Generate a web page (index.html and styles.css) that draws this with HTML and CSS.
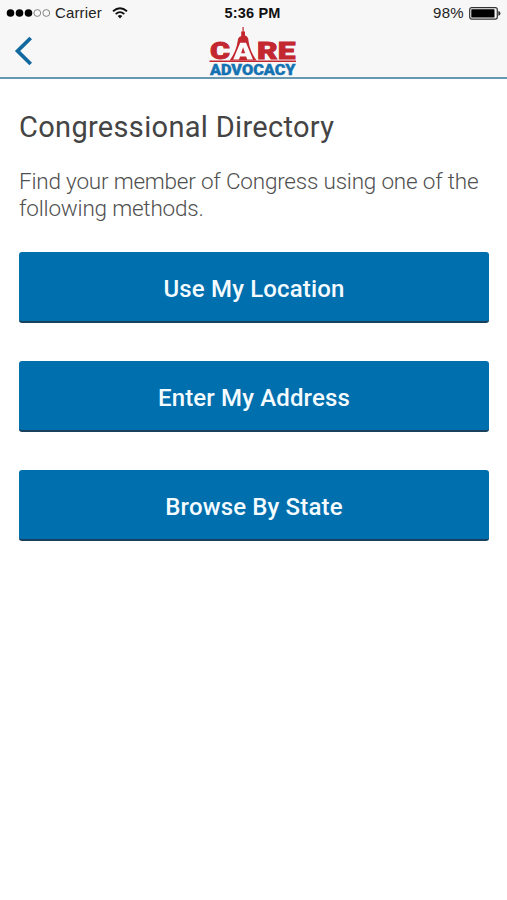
FILE: index.html
```html
<!DOCTYPE html>
<html lang="en">
<head>
<meta charset="utf-8">
<title>Congressional Directory</title>
<link rel="stylesheet" href="styles.css">
</head>
<body>
<header class="header">
  <div class="status">
    <div class="status-left">
      <svg class="signal" width="44" height="10" viewBox="0 0 44 10">
        <g fill="#000"><circle cx="4.5" cy="5" r="3.8"/><circle cx="13.5" cy="5" r="3.8"/><circle cx="22.5" cy="5" r="3.8"/></g>
        <g fill="none" stroke="#666" stroke-width=".8"><circle cx="31.3" cy="5" r="3.4"/><circle cx="40.3" cy="5" r="3.4"/></g>
      </svg>
      <span class="carrier">Carrier</span>
      <svg class="wifi" width="16" height="12" viewBox="0 0 16 12">
        <g fill="none" stroke="#111" stroke-width="1.8"><path d="M1 4.2Q8-1.8 15 4.2"/><path d="M3.7 7Q8 3.2 12.3 7"/></g>
        <path d="M5.7 9Q8 7 10.3 9L8 11.5Z" fill="#111"/>
      </svg>
    </div>
    <span class="time">5:36 PM</span>
    <div class="status-right">
      <span class="percent">98%</span>
      <svg width="32" height="13" viewBox="0 0 32 13">
        <rect x=".7" y=".7" width="27.6" height="11.4" rx="2" fill="none" stroke="#333" stroke-width="1.2"/>
        <rect x="2.3" y="2.3" width="23.2" height="8.2" rx=".5" fill="#000"/>
        <path d="M29.3 4Q31.5 4.5 31.5 6.4T29.3 8.8Z" fill="#333"/>
      </svg>
    </div>
  </div>
  <nav class="nav">
    <svg class="back" width="20" height="32" viewBox="0 0 20 32">
      <path d="M16.7 3L3.6 16L16.7 29" fill="none" stroke="#12699f" stroke-width="3.8"/>
    </svg>
    <svg class="logo" width="90" height="52" viewBox="0 0 90 52">
      <g class="logo-care">
        <text x="2" y="33" textLength="20" lengthAdjust="spacingAndGlyphs">C</text>
        <text x="49" y="33" textLength="38.5" lengthAdjust="spacingAndGlyphs">RE</text>
      </g>
      <g fill="#c32730">
        <path d="M34.5 1h1.2v4.5h1.3v4.5h-3.8V5.5h1.3Z"/>
        <path d="M29.6 15.5Q29.8 10.3 35.1 9.6T40.6 15.5Q41.8 25 48.6 34.6H21.6Q28.4 25 29.6 15.5Z"/>
        <rect x="1.5" y="34.5" width="86.5" height="1.5"/>
      </g>
      <path fill="#fafafa" fill-rule="evenodd" d="M32.2 16.8H38L45 33.6H39.2L38.1 30.5H32.1L31 33.6H25.2ZM35.1 21.2L33.1 27.3H37.1Z"/>
      <text class="logo-advocacy" x="2" y="49.1" textLength="85.5" lengthAdjust="spacingAndGlyphs">ADVOCACY</text>
    </svg>
  </nav>
</header>
<main class="content">
  <h1 class="title">Congressional Directory</h1>
  <p class="intro">Find your member of Congress using one of the<br>following methods.</p>
  <div class="actions">
    <button class="action">Use My Location</button>
    <button class="action">Enter My Address</button>
    <button class="action">Browse By State</button>
  </div>
</main>
</body>
</html>
```
FILE: styles.css
```css
* { box-sizing: border-box; }
body { margin: 0; background: #fff; font-family: Roboto, sans-serif; }
.header { height: 79px; background: #f7f7f7; border-bottom: 2px solid #6798b0; }
.status {
  display: grid;
  grid-template-columns: 1fr auto 1fr;
  align-items: center;
  height: 26px;
  padding: 0 6px 0 6px;
  font: 15px/26px "Liberation Sans", sans-serif;
  color: #222;
}
.status-left, .status-right { display: flex; align-items: center; }
.status-right { justify-content: flex-end; gap: 5px; }
.carrier { margin-left: 5px; letter-spacing: .15px; }
.wifi { margin-left: 10px; }
.time { margin-right: 2px; font-weight: 700; font-size: 14.5px; letter-spacing: .2px; color: #111; }
.percent { letter-spacing: .3px; }
.nav {
  display: grid;
  grid-template-columns: 1fr auto 1fr;
  height: 51px;
}
.back { margin: 9px 0 0 14px; }
.logo { display: block; margin-right: 1px; }
.logo-care { font: 900 24.5px Roboto, sans-serif; fill: #c32730; stroke: #c32730; stroke-width: .8px; }
.logo-advocacy { font: 900 14px Roboto, sans-serif; fill: #1472b2; stroke: #1472b2; stroke-width: .4px; }
.content { padding: 30px 18px 0 19px; }
.title { margin: 0; font-size: 29px; line-height: 36px; font-weight: 400; letter-spacing: .32px; color: #444; white-space: nowrap; }
.intro { margin: 23px 0 0; font-size: 22.5px; line-height: 26.5px; font-weight: 300; letter-spacing: -.2px; color: #505050; white-space: nowrap; }
.actions { display: flex; flex-direction: column; gap: 38px; margin-top: 31px; }
.action {
  height: 71px;
  padding: 4px 0 0;
  border: 0;
  border-bottom: 2px solid #19415e;
  border-radius: 3px;
  background: #006fae;
  color: #f4fbff;
  font: 500 24px Roboto, sans-serif;
  letter-spacing: .15px;
}
```
